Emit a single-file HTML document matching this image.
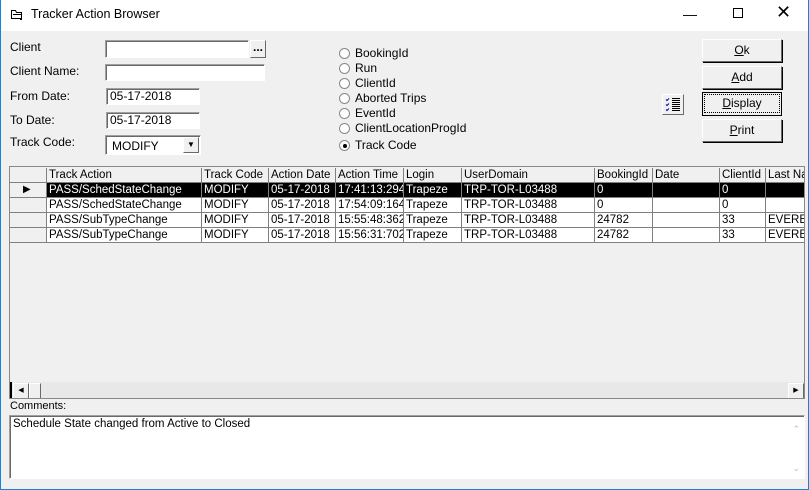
<!DOCTYPE html>
<html><head><style>
*{box-sizing:border-box;margin:0;padding:0}
body{width:809px;height:490px;overflow:hidden;background:#f0f0f0;font-family:"Liberation Sans",sans-serif;font-size:12px;color:#000;position:relative}
.a{position:absolute}
.win{left:0;top:0;width:809px;height:490px;border:1px solid #1883d7;border-top:none;z-index:5}
.title{left:0;top:0;width:809px;height:31px;background:#fff}
.inp{background:#fff;border:1px solid;border-color:#a0a0a0 #fff #fff #a0a0a0;box-shadow:inset 1px 1px 0 #696969}
.btn{background:#f0f0f0;border:1px solid;border-color:#fff #696969 #696969 #fff;box-shadow:1px 1px 0 #000;text-align:center;font-size:12px}
.radio{width:11px;height:11px;border-radius:50%;background:#fff;border:1px solid #888}
.grid{left:9px;top:166px;width:796px;height:233px;background:#f0f0f0;border:1px solid #888;overflow:hidden}
.row{position:absolute;left:0;height:15px;width:800px}
.c{position:absolute;top:0;height:15px;border-right:1px solid #808080;border-bottom:1px solid #808080;padding-left:2px;line-height:14px;white-space:nowrap;overflow:hidden;font-size:11.5px}
</style></head><body>
<div class="a title"></div>
<div class="a win"></div>
<svg class="a" style="left:10px;top:8px" width="14" height="14"><path d="M1.5 2.5h4l1 2h5v6h-10z" fill="none" stroke="#000"/><path d="M3 6.5h8" stroke="#000"/><rect x="10" y="10" width="2" height="2" fill="#000"/></svg>
<div class="a" style="left:31px;top:7px;font-size:12.5px">Tracker Action Browser</div>
<div class="a" style="left:683px;top:6px;font-size:14px">&#8212;</div>
<div class="a" style="left:733px;top:8px;width:10px;height:10px;border:1px solid #000"></div>
<div class="a" style="left:776px;top:2px;font-size:18px;font-weight:300">&#x2715;</div>

<div class="a" style="left:10px;top:40px">Client</div>
<div class="a" style="left:10px;top:64px">Client Name:</div>
<div class="a" style="left:10px;top:89px">From Date:</div>
<div class="a" style="left:10px;top:113px">To Date:</div>
<div class="a" style="left:10px;top:135px">Track Code:</div>
<div class="a inp" style="left:105px;top:40px;width:144px;height:18px"></div>
<div class="a btn" style="left:250px;top:40px;width:16px;height:18px;box-shadow:none;line-height:12px;font-weight:bold">...</div>
<div class="a inp" style="left:105px;top:64px;width:160px;height:17px"></div>
<div class="a inp" style="left:106px;top:88px;width:94px;height:17px;padding-left:3px;line-height:15px">05-17-2018</div>
<div class="a inp" style="left:106px;top:112px;width:94px;height:17px;padding-left:3px;line-height:15px">05-17-2018</div>
<div class="a inp" style="left:105px;top:135px;width:96px;height:20px;padding-left:6px;line-height:20px">MODIFY</div>
<div class="a btn" style="left:183px;top:137px;width:16px;height:16px;box-shadow:none;font-size:8px;line-height:14px">&#9660;</div>

<div class="a radio" style="left:339px;top:48px"></div><div class="a" style="left:355px;top:46px">BookingId</div>
<div class="a radio" style="left:339px;top:63px"></div><div class="a" style="left:355px;top:61px">Run</div>
<div class="a radio" style="left:339px;top:78px"></div><div class="a" style="left:355px;top:76px">ClientId</div>
<div class="a radio" style="left:339px;top:93px"></div><div class="a" style="left:355px;top:91px">Aborted Trips</div>
<div class="a radio" style="left:339px;top:108px"></div><div class="a" style="left:355px;top:106px">EventId</div>
<div class="a radio" style="left:339px;top:123px"></div><div class="a" style="left:355px;top:121px">ClientLocationProgId</div>
<div class="a radio" style="left:339px;top:140px"><div style="position:absolute;left:3px;top:3px;width:4px;height:4px;border-radius:50%;background:#000"></div></div><div class="a" style="left:355px;top:138px">Track Code</div>

<div class="a btn" style="left:702px;top:39px;width:80px;height:23px;line-height:21px"><u>O</u>k</div>
<div class="a btn" style="left:702px;top:66px;width:80px;height:23px;line-height:21px"><u>A</u>dd</div>
<div class="a btn" style="left:702px;top:92px;width:80px;height:24px;border:1px solid #000;box-shadow:none;line-height:20px;padding:1px"><div style="border:1px dotted #000;height:19px;line-height:17px"><u>D</u>isplay</div></div>
<div class="a btn" style="left:702px;top:119px;width:80px;height:23px;line-height:21px"><u>P</u>rint</div>
<div class="a btn" style="left:662px;top:94px;width:22px;height:21px;box-shadow:none">
<svg width="20" height="19" style="display:block"><g stroke="#000" stroke-width="1"><path d="M9 3.5h8M9 5.5h8M9 7.5h8M9 9.5h8M9 11.5h8M9 13.5h8M9 15.5h8"/></g><path d="M3 4.5l1 1 2-2M3 9.5l1 1 2-2M3 14.5l1 1 2-2" stroke="#00a" fill="none"/></svg></div>

<div class="a grid">
<div class="row" style="top:1px">
<div class="c" style="left:0;width:37px"></div>
<div class="c" style="left:37px;width:155px">Track Action</div>
<div class="c" style="left:192px;width:67px">Track Code</div>
<div class="c" style="left:259px;width:67px">Action Date</div>
<div class="c" style="left:326px;width:68px">Action Time</div>
<div class="c" style="left:394px;width:58px">Login</div>
<div class="c" style="left:452px;width:133px">UserDomain</div>
<div class="c" style="left:585px;width:58px">BookingId</div>
<div class="c" style="left:643px;width:67px">Date</div>
<div class="c" style="left:710px;width:46px">ClientId</div>
<div class="c" style="left:756px;width:50px">Last Name</div>
</div>
<div class="row" style="top:16px">
<div class="c" style="left:0;width:37px;font-size:10px;padding-left:13px">&#9654;</div>
<div style="position:absolute;left:37px;top:0;width:770px;height:15px;background:#000"></div>
<div class="c" style="left:37px;width:155px;color:#fff">PASS/SchedStateChange</div>
<div class="c" style="left:192px;width:67px;color:#fff">MODIFY</div>
<div class="c" style="left:259px;width:67px;color:#fff">05-17-2018</div>
<div class="c" style="left:326px;width:68px;color:#fff">17:41:13:294</div>
<div class="c" style="left:394px;width:58px;color:#fff">Trapeze</div>
<div class="c" style="left:452px;width:133px;color:#fff">TRP-TOR-L03488</div>
<div class="c" style="left:585px;width:58px;color:#fff">0</div>
<div class="c" style="left:643px;width:67px"></div>
<div class="c" style="left:710px;width:46px;color:#fff">0</div>
<div class="c" style="left:756px;width:50px"></div>
</div>
<div class="row" style="top:31px;background:#fff">
<div class="c" style="left:0;width:37px;background:#f0f0f0"></div>
<div class="c" style="left:37px;width:155px">PASS/SchedStateChange</div>
<div class="c" style="left:192px;width:67px">MODIFY</div>
<div class="c" style="left:259px;width:67px">05-17-2018</div>
<div class="c" style="left:326px;width:68px">17:54:09:164</div>
<div class="c" style="left:394px;width:58px">Trapeze</div>
<div class="c" style="left:452px;width:133px">TRP-TOR-L03488</div>
<div class="c" style="left:585px;width:58px">0</div>
<div class="c" style="left:643px;width:67px"></div>
<div class="c" style="left:710px;width:46px">0</div>
<div class="c" style="left:756px;width:50px"></div>
</div>
<div class="row" style="top:46px;background:#fff">
<div class="c" style="left:0;width:37px;background:#f0f0f0"></div>
<div class="c" style="left:37px;width:155px">PASS/SubTypeChange</div>
<div class="c" style="left:192px;width:67px">MODIFY</div>
<div class="c" style="left:259px;width:67px">05-17-2018</div>
<div class="c" style="left:326px;width:68px">15:55:48:362</div>
<div class="c" style="left:394px;width:58px">Trapeze</div>
<div class="c" style="left:452px;width:133px">TRP-TOR-L03488</div>
<div class="c" style="left:585px;width:58px">24782</div>
<div class="c" style="left:643px;width:67px"></div>
<div class="c" style="left:710px;width:46px">33</div>
<div class="c" style="left:756px;width:50px">EVERETT</div>
</div>
<div class="row" style="top:61px;background:#fff">
<div class="c" style="left:0;width:37px;background:#f0f0f0"></div>
<div class="c" style="left:37px;width:155px">PASS/SubTypeChange</div>
<div class="c" style="left:192px;width:67px">MODIFY</div>
<div class="c" style="left:259px;width:67px">05-17-2018</div>
<div class="c" style="left:326px;width:68px">15:56:31:702</div>
<div class="c" style="left:394px;width:58px">Trapeze</div>
<div class="c" style="left:452px;width:133px">TRP-TOR-L03488</div>
<div class="c" style="left:585px;width:58px">24782</div>
<div class="c" style="left:643px;width:67px"></div>
<div class="c" style="left:710px;width:46px">33</div>
<div class="c" style="left:756px;width:50px">EVERETT</div>
</div>
<div style="position:absolute;left:0;top:215px;width:796px;height:17px;background:#e8e8e8"></div>
<div style="position:absolute;left:0;top:215px;width:2px;height:17px;background:#000"></div>
<div class="btn" style="position:absolute;left:3px;top:216px;width:16px;height:16px;box-shadow:none;font-size:7px;line-height:14px">&#9664;</div>
<div class="btn" style="position:absolute;left:19px;top:216px;width:12px;height:16px;box-shadow:none"></div>
<div class="btn" style="position:absolute;left:778px;top:216px;width:16px;height:16px;box-shadow:none;font-size:7px;line-height:14px">&#9654;</div>
</div>

<div class="a" style="left:10px;top:400px;font-size:11px">Comments:</div>
<div class="a inp" style="left:9px;top:415px;width:796px;height:64px;padding:2px 3px;font-size:11.5px">Schedule State changed from Active to Closed
<div style="position:absolute;right:4px;top:8px;color:#bbb;font-size:9px">&#8963;</div>
<div style="position:absolute;right:4px;bottom:4px;color:#bbb;font-size:9px">&#8964;</div>
</div>
</body></html>
